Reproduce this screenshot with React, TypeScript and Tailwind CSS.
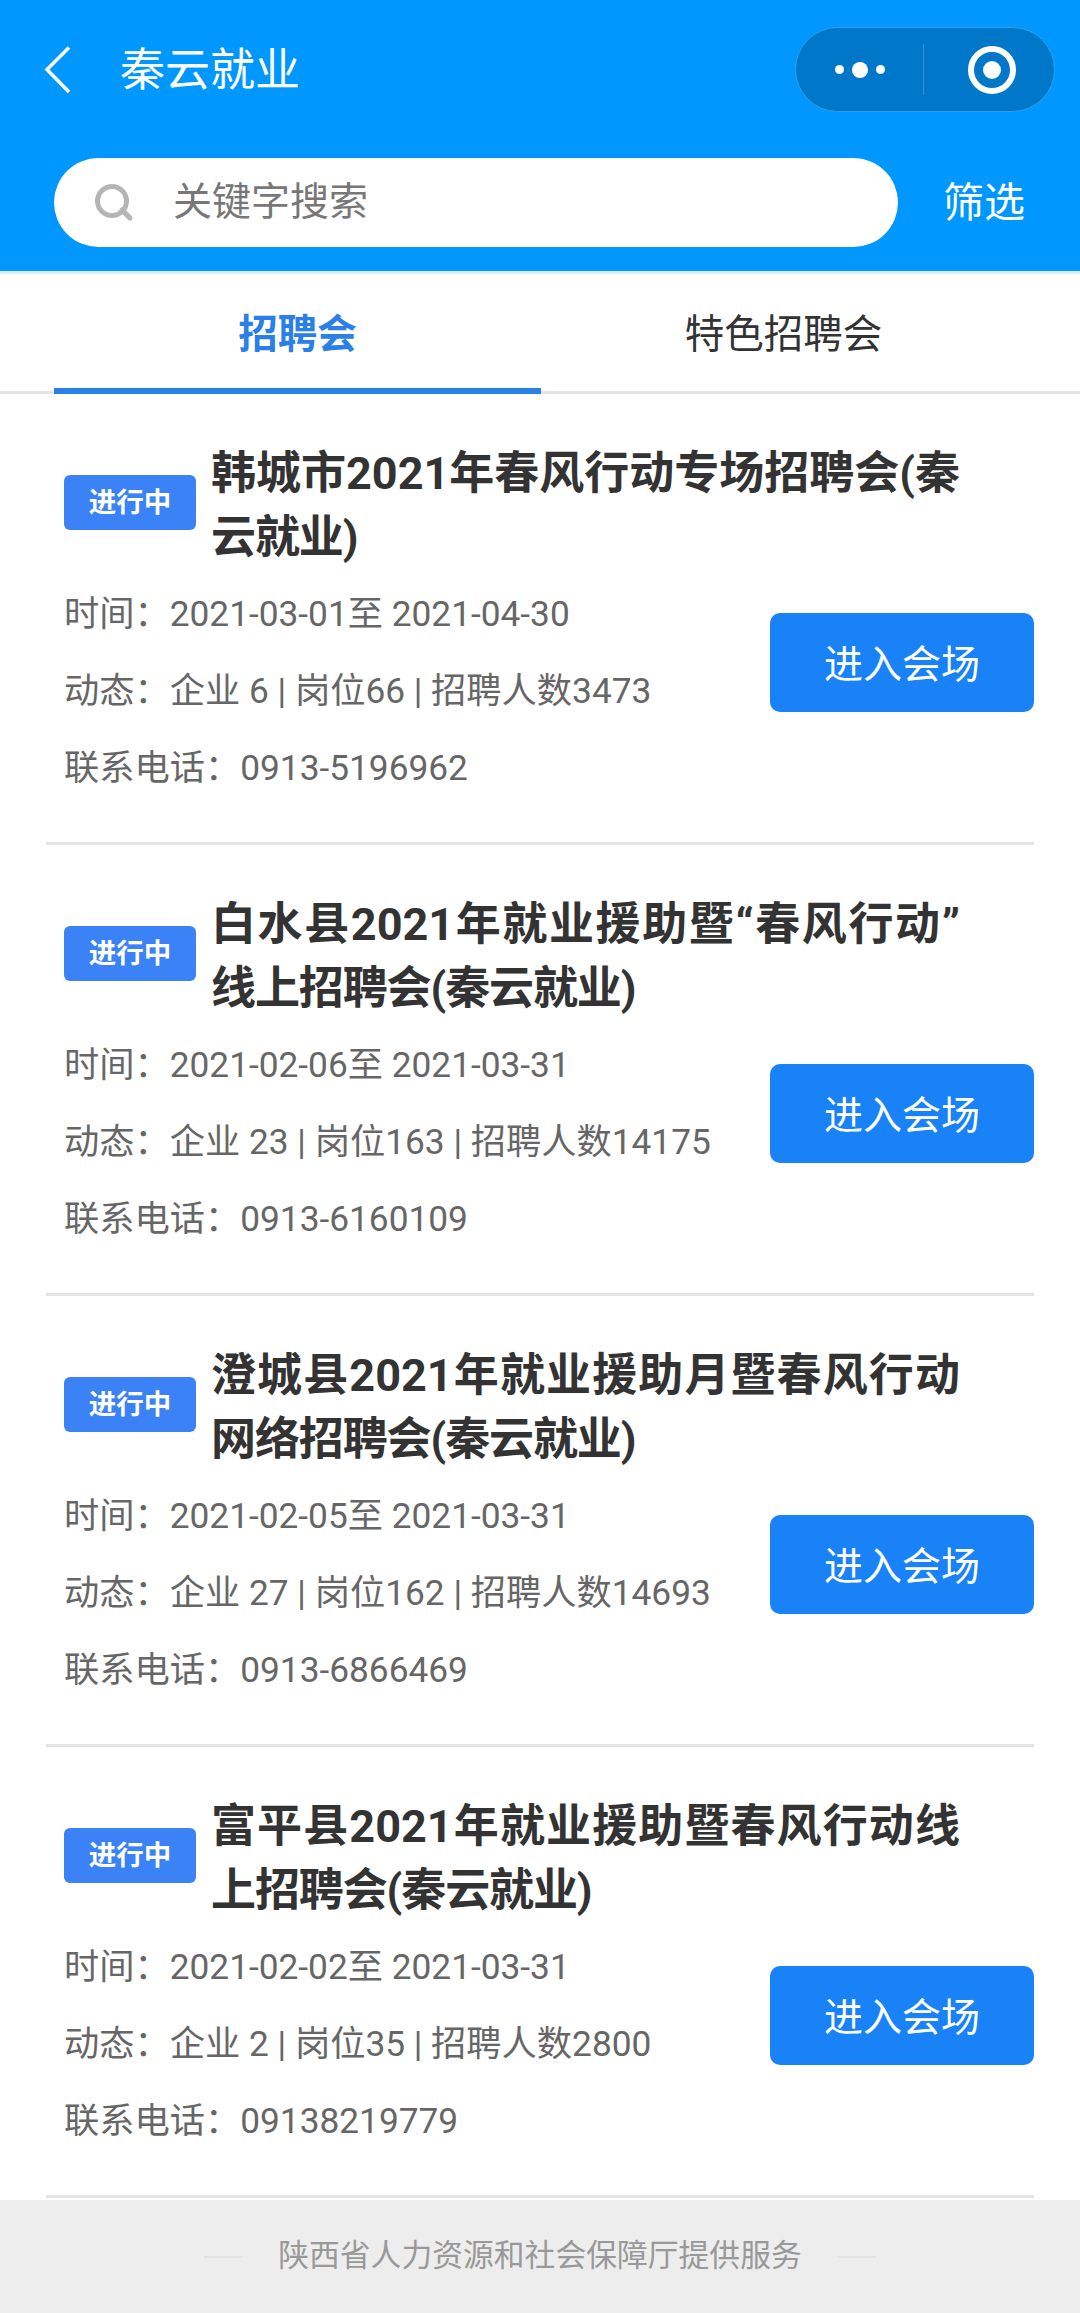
const fontStack = "font-['Roboto','Noto_Sans_CJK_SC',sans-serif]";

const fairs = [
  {
    title: ['韩城市2021年春风行动专场招聘会(秦', '云就业)'],
    time: '2021-03-01至 2021-04-30',
    stats: '企业 6 | 岗位66 | 招聘人数3473',
    phone: '0913-5196962',
  },
  {
    title: ['白水县2021年就业援助暨“春风行动”', '线上招聘会(秦云就业)'],
    time: '2021-02-06至 2021-03-31',
    stats: '企业 23 | 岗位163 | 招聘人数14175',
    phone: '0913-6160109',
  },
  {
    title: ['澄城县2021年就业援助月暨春风行动', '网络招聘会(秦云就业)'],
    time: '2021-02-05至 2021-03-31',
    stats: '企业 27 | 岗位162 | 招聘人数14693',
    phone: '0913-6866469',
  },
  {
    title: ['富平县2021年就业援助暨春风行动线', '上招聘会(秦云就业)'],
    time: '2021-02-02至 2021-03-31',
    stats: '企业 2 | 岗位35 | 招聘人数2800',
    phone: '09138219779',
  },
];

function FairCard({ fair }: { fair: (typeof fairs)[number] }) {
  return (
    <div className="mx-[46px] h-[451px] border-b-[3px] border-[#e4e4e4] pl-[18px] pt-[48px]">
      {/* Title */}
      <div className="flex items-center gap-[15px]">
        <span className="mb-[7px] flex h-[55px] w-[132px] shrink-0 items-center justify-center rounded-[6px] bg-[#3b82f6] text-[27.5px] font-bold text-white">
          进行中
        </span>
        <h2 className="w-[749px] text-[45px] font-bold leading-[64px] text-[#333]">
          <span className="block text-justify [text-align-last:justify]">{fair.title[0]}</span>
          <span className="block tracking-[-1.1px]">{fair.title[1]}</span>
        </h2>
      </div>
      {/* Info + action */}
      <div className="flex items-start justify-between">
        <div className="mt-[6px] text-[35.25px] leading-[77px] text-[#666]">
          <p>时间：{fair.time}</p>
          <p>动态：{fair.stats}</p>
          <p>联系电话：{fair.phone}</p>
        </div>
        <button className="mt-[43px] flex h-[99px] w-[264px] items-center justify-center rounded-[10px] bg-[#1a82f7] pt-[5px] text-[39px] text-white">
          进入会场
        </button>
      </div>
    </div>
  );
}

export default function App() {
  return (
    <div className={`flex h-[2313px] w-[1080px] flex-col overflow-hidden bg-white ${fontStack}`}>
      {/* Nav bar */}
      <div className="h-[271px] bg-[#0097ff]">
        <div className="flex h-[139px] items-center justify-between pl-[42px] pr-[25px]">
          <div className="flex items-center gap-[46px]">
            <svg width="32" height="48" viewBox="0 0 32 48" fill="none" stroke="white" strokeWidth="3.5">
              <path d="M27 1.5 L5 23.5 L27 46" />
            </svg>
            <span className="pt-[2px] text-[45px] text-white">秦云就业</span>
          </div>
          <div className="flex h-[85px] w-[260px] items-center rounded-full border border-[#2f9fe8] bg-[#0077c8]">
            <div className="flex h-full flex-1 items-center justify-center gap-[8px]">
              <span className="h-[9px] w-[9px] rounded-full bg-white" />
              <span className="h-[16px] w-[16px] rounded-full bg-white" />
              <span className="h-[9px] w-[9px] rounded-full bg-white" />
            </div>
            <div className="h-[51px] w-px bg-[#2f8fd0]" />
            <div className="flex h-full w-[130px] items-center justify-center pl-[6px]">
              <div className="flex h-[48px] w-[48px] items-center justify-center rounded-full border-[6px] border-white">
                <span className="h-[18px] w-[18px] rounded-full bg-white" />
              </div>
            </div>
          </div>
        </div>
        {/* Search */}
        <div className="mt-[19px] flex items-center pl-[54px]">
          <div className="flex h-[89px] w-[844px] items-center rounded-full bg-white pl-[40px]">
            <svg width="40" height="40" viewBox="0 0 40 40" fill="none" stroke="#b5b5b5" strokeWidth="5">
              <circle cx="18" cy="18" r="14.5" />
              <path d="M28 27 L36 35" strokeLinecap="round" />
            </svg>
            <span className="ml-[39px] text-[39px] text-[#777]">关键字搜索</span>
          </div>
          <span className="ml-[45px] pt-[2px] text-[41px] text-white">筛选</span>
        </div>
      </div>
      {/* Tabs */}
      <div className="flex h-[123px] items-stretch border-b-[3px] border-t-[3px] border-b-[#e4e4e4] border-t-[#d6efff] px-[54px]">
        <div className="-mb-[3px] flex w-[487px] items-center justify-center border-b-[6px] border-[#2b7fe8] pt-[8px] text-[39.5px] font-bold text-[#2b7fe8]">
          招聘会
        </div>
        <div className="flex flex-1 items-center justify-center pt-[4px] text-[39.5px] text-[#333]">特色招聘会</div>
      </div>
      {/* List */}
      <div className="flex-1 overflow-hidden">
        {fairs.map((fair) => (
          <FairCard key={fair.phone} fair={fair} />
        ))}
      </div>
      {/* Footer */}
      <div className="flex h-[113px] items-center justify-center gap-[36px] bg-[#ededed] text-[30.8px] text-[#999]">
        <span className="h-[2px] w-[38px] bg-[#e2e2e2]" />
        <span>陕西省人力资源和社会保障厅提供服务</span>
        <span className="h-[2px] w-[38px] bg-[#e2e2e2]" />
      </div>
    </div>
  );
}
